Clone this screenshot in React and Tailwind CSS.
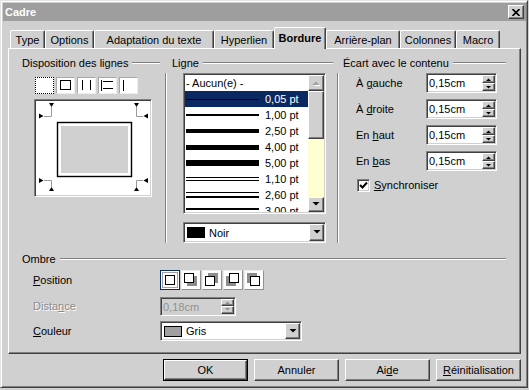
import React from 'react';

const raised =
  'border border-t-white border-l-white border-r-[#404040] border-b-[#404040] shadow-[inset_-1px_-1px_0_#808080]';
const sunken =
  'border border-t-[#808080] border-l-[#808080] border-r-white border-b-white shadow-[inset_1px_1px_0_#404040,inset_-1px_-1px_0_#d0d0d0] p-[1px]';

function Header({ label, className = '' }) {
  return (
    <div className={`flex items-center h-[14px] ${className}`}>
      <span className="whitespace-nowrap">{label}</span>
      <div className="ml-[4px] flex-1 h-[2px] border-t border-b border-t-[#808080] border-b-white" />
    </div>
  );
}

function VSep() {
  return <div className="mt-[17px] w-[2px] h-[170px] border-l border-r border-l-[#808080] border-r-white" />;
}

function Arrow({ up, color = '#000', shadow }) {
  return (
    <svg width="8" height="5" viewBox="0 0 8 5" className="block">
      {shadow && (
        <polygon points={up ? '1.5,5 8.5,5 5,1.5' : '1.5,1 8.5,1 5,4.5'} fill="#fff" />
      )}
      <polygon points={up ? '0.5,4 7.5,4 4,0.5' : '0.5,0 7.5,0 4,3.5'} fill={color} />
    </svg>
  );
}

function SmallArrow({ up, color = '#000' }) {
  return (
    <svg width="5" height="3" viewBox="0 0 5 3" className="block">
      <polygon points={up ? '0,3 5,3 2.5,0.5' : '0,0 5,0 2.5,2.5'} fill={color} />
    </svg>
  );
}

function Tab({ label, w, active }) {
  return (
    <div
      className={`${w} ${
        active ? 'h-[22px] -mb-[1px] z-10 font-bold pb-[2px]' : 'h-[18px]'
      } relative bg-[#d0d0d0] flex items-center justify-center border-t border-l border-r border-t-white border-l-white border-r-[#404040] shadow-[inset_-1px_0_0_#808080] rounded-t-[2px] whitespace-nowrap`}
    >
      {label}
    </div>
  );
}

function SpinField({ value, className = '', disabled }) {
  return (
    <div className={`${sunken} h-[20px] flex ${disabled ? 'bg-[#d0d0d0]' : 'bg-white'} ${className}`}>
      <span
        className={`flex-1 pl-[1px] leading-[16px] ${
          disabled ? 'text-[#909090]' : 'text-black'
        }`}
      >
        {value}
      </span>
      <div className="w-[13px] flex flex-col">
        <div className={`${raised} h-[8px] bg-[#d0d0d0] flex items-center justify-center`}>
          <SmallArrow up color={disabled ? '#909090' : '#000'} />
        </div>
        <div className={`${raised} h-[8px] bg-[#d0d0d0] flex items-center justify-center`}>
          <SmallArrow color={disabled ? '#909090' : '#000'} />
        </div>
      </div>
    </div>
  );
}

function Dropdown({ className, swatch, label }) {
  return (
    <div className={`${sunken} bg-white flex items-center ${className}`}>
      <div className={`ml-[2px] w-[18px] h-[11px] border border-black ${swatch}`} />
      <span className="ml-[4px] flex-1">{label}</span>
      <div className={`${raised} w-[15px] h-full bg-[#d0d0d0] flex items-center justify-center`}>
        <Arrow />
      </div>
    </div>
  );
}

const presets = ['none', 'box', 'lr', 'tb', 'l'];

function PresetIcon({ kind }) {
  return (
    <svg width="17" height="15" viewBox="0 0 17 15" className="block">
      {kind === 'box' && <rect x="3.5" y="2.5" width="10" height="9" fill="none" stroke="#000" />}
      {kind === 'lr' && (
        <path d="M4.5 2 V12 M12.5 2 V12" stroke="#000" fill="none" />
      )}
      {kind === 'tb' && (
        <path d="M2.5 2 V13 M4 3.5 H14 M4 10.5 H14" stroke="#000" fill="none" />
      )}
      {kind === 'l' && <path d="M3.5 2 V13" stroke="#000" fill="none" />}
    </svg>
  );
}

const shadows = [
  { key: 'none', box: [4.5, 4.5] },
  { key: 'br', shadow: [5, 5], box: [2.5, 2.5] },
  { key: 'tr', shadow: [5, 2], box: [2.5, 5.5] },
  { key: 'bl', shadow: [2, 5], box: [5.5, 2.5] },
  { key: 'tl', shadow: [2, 2], box: [5.5, 5.5] },
];

function ShadowIcon({ s }) {
  return (
    <svg width="18" height="18" viewBox="0 0 18 18" className="block">
      {s.shadow && <rect x={s.shadow[0]} y={s.shadow[1]} width="10" height="10" fill="#8c8c8c" />}
      <rect x={s.box[0]} y={s.box[1]} width="9" height="9" fill="#fff" stroke="#000" />
    </svg>
  );
}

const lines = [
  { label: '0,05 pt', bars: ['h-[1px]'], gap: '', selected: true },
  { label: '1,00 pt', bars: ['h-[2px]'], gap: '' },
  { label: '2,50 pt', bars: ['h-[4px]'], gap: '' },
  { label: '4,00 pt', bars: ['h-[5px]'], gap: '' },
  { label: '5,00 pt', bars: ['h-[6px]'], gap: '' },
  { label: '1,10 pt', bars: ['h-[1px]', 'h-[1px]'], gap: 'gap-[2px]' },
  { label: '2,60 pt', bars: ['h-[1px]', 'h-[2px]'], gap: 'gap-[3px]' },
  { label: '3,00 pt', bars: ['h-[2px]', 'h-[2px]'], gap: 'gap-[2px]' },
];

function Preview() {
  const g = '#9a9a9a';
  return (
    <svg width="114" height="94" viewBox="0 0 114 94" className="block">
      {/* corner guides */}
      <path d="M15.5 6 V15.5 H8" stroke={g} fill="none" />
      <path d="M100.5 6 V15.5 H107" stroke={g} fill="none" />
      <path d="M8 79.5 H15.5 V86" stroke={g} fill="none" />
      <path d="M107 79.5 H100.5 V86" stroke={g} fill="none" />
      <polygon points="13,2 18,2 15.5,6" fill="#000" />
      <polygon points="3,12.5 3,17.5 7.5,15" fill="#000" />
      <polygon points="98,2 103,2 100.5,6" fill="#000" />
      <polygon points="112,12.5 112,17.5 107.5,15" fill="#000" />
      <polygon points="3,77 3,82 7.5,79.5" fill="#000" />
      <polygon points="13,90 18,90 15.5,86" fill="#000" />
      <polygon points="112,77 112,82 107.5,79.5" fill="#000" />
      <polygon points="98,90 103,90 100.5,86" fill="#000" />
      {/* frame */}
      <rect x="21.5" y="21.5" width="74" height="54" fill="#fff" stroke="#000" strokeWidth="1.4" />
      <rect x="25" y="25" width="67" height="47" fill="#d0d0d0" />
    </svg>
  );
}

function Row({ label, children }) {
  return (
    <div className="flex items-center h-[20px] pl-[13px]">
      <span className="w-[70px] whitespace-nowrap">{label}</span>
      {children}
    </div>
  );
}

export default function App() {
  return (
    <div className="w-[529px] h-[390px] bg-[#d0d0d0] font-['Liberation_Sans',Arial,sans-serif] text-[11px] leading-[14px] text-black select-none">
      <div className="w-[528px] h-[388px] flex flex-col border border-t-[#e4e4e4] border-l-[#e4e4e4] border-r-[#404040] border-b-[#404040] shadow-[inset_1px_1px_0_#fff,inset_-1px_-1px_0_#808080]">
        {/* title bar */}
        <div className="mt-[2px] ml-[2px] mr-[1px] h-[18px] bg-[#9e9e9e] flex items-center justify-between">
          <span className="pl-[2px] font-bold text-white">Cadre</span>
          <div className={`${raised} mr-[2px] w-[16px] h-[14px] bg-[#d0d0d0] flex items-center justify-center`}>
            <svg width="8" height="7" viewBox="0 0 8 7" className="block">
              <path d="M0.5 0 L7.5 7 M7.5 0 L0.5 7" stroke="#000" strokeWidth="1.6" />
            </svg>
          </div>
        </div>

        <div className="pl-[7px] pr-[6px] flex flex-col">
          {/* tabs */}
          <div className="mt-[6px] h-[21px] pl-[2px] flex items-end">
            <Tab label="Type" w="w-[35px]" />
            <Tab label="Options" w="w-[49px]" />
            <Tab label="Adaptation du texte" w="w-[120px]" />
            <Tab label="Hyperlien" w="w-[60px]" />
            <Tab label="Bordure" w="w-[52px]" active />
            <Tab label="Arrière-plan" w="w-[74px]" />
            <Tab label="Colonnes" w="w-[56px]" />
            <Tab label="Macro" w="w-[44px]" />
          </div>

          {/* panel */}
          <div className="h-[306px] pt-[7px] border border-t-white border-l-white border-r-[#404040] border-b-[#404040] shadow-[inset_-1px_-1px_0_#808080]">
            <div className="flex items-start">
              {/* Disposition des lignes */}
              <div className="ml-[13px] w-[138px] flex flex-col">
                <Header label="Disposition des lignes" />
                <div className="mt-[7px] ml-[13px] flex gap-[2px]">
                  {presets.map((p, i) => (
                    <div
                      key={p}
                      className={`w-[19px] h-[17px] bg-white border ${
                        i === 0
                          ? 'border-dotted border-black'
                          : 'border-t-[#a8a8a8] border-l-[#a8a8a8] border-r-[#eeeeee] border-b-[#eeeeee]'
                      }`}
                    >
                      <PresetIcon kind={p} />
                    </div>
                  ))}
                </div>
                <div className={`mt-[5px] ml-[12px] w-[118px] h-[98px] bg-white ${sunken}`}>
                  <Preview />
                </div>
              </div>

              <div className="ml-[5px]">
                <VSep />
              </div>

              {/* Ligne */}
              <div className="ml-[5px] w-[161px] flex flex-col">
                <Header label="Ligne" />
                <div className={`mt-[3px] ml-[11px] w-[143px] h-[141px] bg-white flex ${sunken}`}>
                  <div className="flex-1 flex flex-col overflow-hidden">
                    <div className="h-[16px] leading-[16px] pl-[1px] shrink-0">- Aucun(e) -</div>
                    {lines.map((l) => (
                      <div
                        key={l.label}
                        className={`h-[16px] shrink-0 flex items-center ${
                          l.selected ? 'bg-[#0a2862] text-white' : ''
                        }`}
                      >
                        <div className={`ml-[1px] w-[73px] flex flex-col ${l.gap}`}>
                          {l.bars.map((b, i) => (
                            <div key={i} className={`${b} bg-black`} />
                          ))}
                        </div>
                        <span className="ml-[6px] whitespace-nowrap">{l.label}</span>
                      </div>
                    ))}
                  </div>
                  <div className="w-[16px] flex flex-col">
                    <div className={`${raised} h-[16px] bg-[#d0d0d0] flex items-center justify-center`}>
                      <Arrow up color="#a0a0a0" shadow />
                    </div>
                    <div className={`${raised} h-[48px] bg-[#d0d0d0]`} />
                    <div className="flex-1 bg-[#ffffd2]" />
                    <div className={`${raised} h-[15px] bg-[#d0d0d0] flex items-center justify-center`}>
                      <Arrow />
                    </div>
                  </div>
                </div>
                <Dropdown className="mt-[8px] ml-[11px] w-[143px] h-[21px]" swatch="bg-black" label="Noir" />
              </div>

              <div className="ml-[4px]">
                <VSep />
              </div>

              {/* Écart avec le contenu */}
              <div className="ml-[4px] w-[163px] flex flex-col">
                <Header label="Écart avec le contenu" />
                <div className="mt-[3px] flex flex-col gap-[6px]">
                  <Row label={<>À <u>g</u>auche</>}>
                    <SpinField value="0,15cm" className="w-[71px]" />
                  </Row>
                  <Row label={<>À <u>d</u>roite</>}>
                    <SpinField value="0,15cm" className="w-[71px]" />
                  </Row>
                  <Row label={<>En <u>h</u>aut</>}>
                    <SpinField value="0,15cm" className="w-[71px]" />
                  </Row>
                  <Row label={<>En <u>b</u>as</>}>
                    <SpinField value="0,15cm" className="w-[71px]" />
                  </Row>
                </div>
                <div className="mt-[7px] pl-[14px] flex items-center">
                  <div className={`w-[13px] h-[13px] bg-white ${sunken} !p-0 flex items-center justify-center`}>
                    <svg width="9" height="9" viewBox="0 0 9 9" className="block">
                      <path d="M1 4 L3.5 6.5 L8 1.5" stroke="#000" strokeWidth="2" fill="none" />
                    </svg>
                  </div>
                  <span className="ml-[4px]">
                    <u>S</u>ynchroniser
                  </span>
                </div>
              </div>
            </div>

            {/* Ombre */}
            <div className="mt-[9px] ml-[13px] w-[484px] flex flex-col">
              <Header label="Ombre" />
              <div className="mt-[4px] flex items-center h-[20px] pl-[11px]">
                <span className="w-[127px]">
                  <u>P</u>osition
                </span>
                <div className="flex gap-[1px]">
                  {shadows.map((s, i) => (
                    <div
                      key={s.key}
                      className={`w-[20px] h-[20px] bg-white border ${
                        i === 0
                          ? 'border-[#0a2862] shadow-[inset_0_0_0_1px_#fff,inset_0_0_0_2px_#a0a0a0]'
                          : 'border-t-[#eeeeee] border-l-[#eeeeee] border-r-[#909090] border-b-[#909090]'
                      }`}
                    >
                      <ShadowIcon s={s} />
                    </div>
                  ))}
                </div>
              </div>
              <div className="mt-[6px] flex items-center h-[20px] pl-[11px]">
                <span className="w-[127px] text-[#8c8c8c] [text-shadow:1px_1px_0_#fff]">
                  Dista<u>n</u>ce
                </span>
                <SpinField value="0,18cm" className="w-[76px] !h-[19px]" disabled />
              </div>
              <div className="mt-[5px] flex items-center h-[20px] pl-[11px]">
                <span className="w-[127px]">
                  <u>C</u>ouleur
                </span>
                <Dropdown className="w-[142px] h-[20px]" swatch="bg-[#a0a0a0]" label="Gris" />
              </div>
            </div>
          </div>

          {/* buttons */}
          <div className="mt-[5px] flex justify-end gap-[6px]">
            <div className="w-[85px] h-[22px] border border-black">
              <div className={`${raised} h-full bg-[#d0d0d0] flex items-center justify-center`}>OK</div>
            </div>
            <div className={`${raised} w-[85px] h-[22px] bg-[#d0d0d0] flex items-center justify-center`}>Annuler</div>
            <div className={`${raised} w-[85px] h-[22px] bg-[#d0d0d0] flex items-center justify-center`}>
              Ai<u>d</u>e
            </div>
            <div className={`${raised} w-[85px] h-[22px] bg-[#d0d0d0] flex items-center justify-center`}>
              <u>R</u>éinitialisation
            </div>
          </div>
        </div>
      </div>
    </div>
  );
}
